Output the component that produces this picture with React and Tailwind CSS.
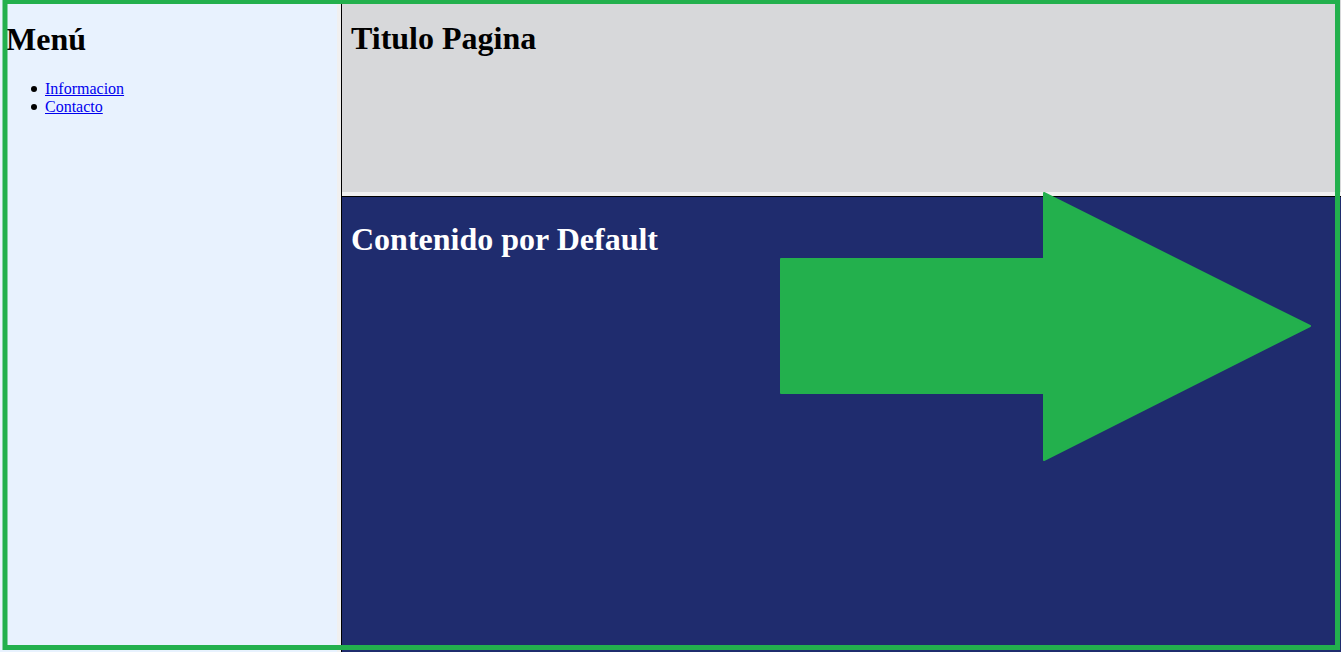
import React from 'react';

const serif = { fontFamily: '"Liberation Serif", "Times New Roman", serif' };

const links = ['Informacion', 'Contacto'];

const App = () => {
  return (
    <div className="relative w-[1341px] h-[652px] overflow-hidden flex bg-[#e8f2fe]" style={serif}>
      {/* Sidebar frame */}
      <aside className="w-[337px] h-full bg-[#e8f2fe] pl-[7px] pt-[21px]">
        <h1 className="text-[32px] font-bold leading-[37px] text-black -ml-px">Menú</h1>
        <ul className="pl-[24px] mt-[22px] text-[16px] leading-[18px]">
          {links.map((l) => (
            <li key={l} className="flex items-center">
              <span className="w-[6px] h-[6px] rounded-full bg-black mr-[8px]" />
              <a href="#" className="text-[#0000ee] underline">{l}</a>
            </li>
          ))}
        </ul>
      </aside>

      {/* Frame border */}
      <div className="w-[4px] h-full bg-[#f0f0f0]" />
      <div className="w-px h-full bg-black" />

      {/* Right frames */}
      <div className="flex-1 h-full flex flex-col">
        <header className="h-[192px] bg-[#d7d8da] pl-[9px] pt-[20px]">
          <h1 className="text-[32px] font-bold leading-[37px] text-black">Titulo Pagina</h1>
        </header>
        <div className="h-[4px] bg-[#f0f0f0]" />
        <div className="h-px bg-black" />
        <main className="flex-1 bg-[#1f2c6e] pl-[9px] pt-[24px]">
          <h1 className="text-[32px] font-bold leading-[37px] text-white">Contenido por Default</h1>
        </main>
      </div>

      {/* Annotation overlay */}
      <svg className="absolute inset-0 pointer-events-none" width="1341" height="652" viewBox="0 0 1341 652">
        <rect x="5" y="1.5" width="1332.5" height="646" fill="none" stroke="#23b04d" strokeWidth="5" />
        <polygon
          points="781,259 1044,259 1044,193 1310,326 1044,460 1044,393 781,393"
          fill="#23b04d"
          stroke="#23b04d"
          strokeWidth="2"
          strokeLinejoin="round"
        />
      </svg>
    </div>
  );
};

export default App;
